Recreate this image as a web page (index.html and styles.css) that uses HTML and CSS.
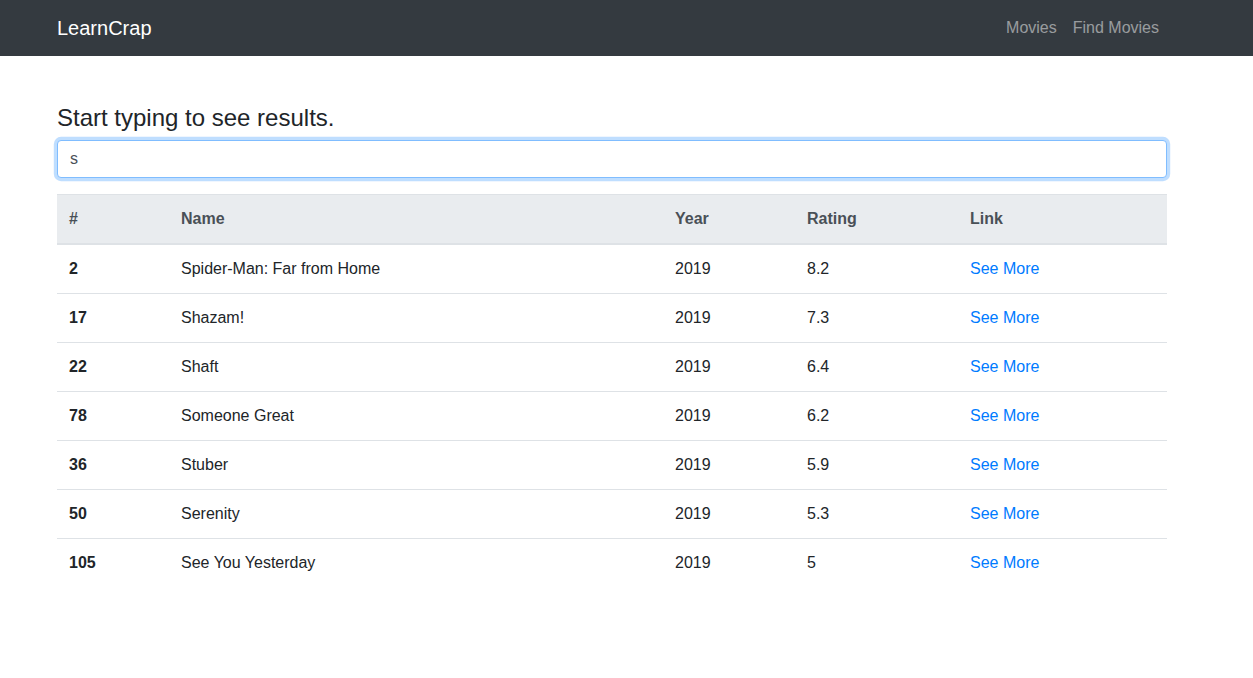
FILE: index.html
```html
<!DOCTYPE html>
<html lang="en">
<head>
<meta charset="utf-8">
<title>LearnCrap</title>
<link rel="stylesheet" href="styles.css">
</head>
<body>
<nav class="navbar">
  <div class="container nav-inner">
    <a class="brand" href="#">LearnCrap</a>
    <ul class="nav-links">
      <li><a class="nav-link" href="#">Movies</a></li>
      <li><a class="nav-link" href="#">Find Movies</a></li>
    </ul>
  </div>
</nav>
<main class="container main">
  <h4 class="title">Start typing to see results.</h4>
  <div class="form-group">
    <input class="form-control" type="text" value="s">
  </div>
  <table class="table">
    <thead>
      <tr>
        <th class="c-id">#</th>
        <th class="c-name">Name</th>
        <th class="c-year">Year</th>
        <th class="c-rating">Rating</th>
        <th class="c-link">Link</th>
      </tr>
    </thead>
    <tbody>
      <tr><th>2</th><td>Spider-Man: Far from Home</td><td>2019</td><td>8.2</td><td><a href="#">See More</a></td></tr>
      <tr><th>17</th><td>Shazam!</td><td>2019</td><td>7.3</td><td><a href="#">See More</a></td></tr>
      <tr><th>22</th><td>Shaft</td><td>2019</td><td>6.4</td><td><a href="#">See More</a></td></tr>
      <tr><th>78</th><td>Someone Great</td><td>2019</td><td>6.2</td><td><a href="#">See More</a></td></tr>
      <tr><th>36</th><td>Stuber</td><td>2019</td><td>5.9</td><td><a href="#">See More</a></td></tr>
      <tr><th>50</th><td>Serenity</td><td>2019</td><td>5.3</td><td><a href="#">See More</a></td></tr>
      <tr><th>105</th><td>See You Yesterday</td><td>2019</td><td>5</td><td><a href="#">See More</a></td></tr>
    </tbody>
  </table>
</main>
</body>
</html>
```
FILE: styles.css
```css
* { box-sizing: border-box; }
body {
  margin: 0;
  font-family: "Liberation Sans", Arial, sans-serif;
  font-size: 16px;
  line-height: 1.5;
  color: #212529;
  background: #fff;
}
.container {
  width: 1110px;
  margin-left: 57px;
}
.navbar {
  background: #343a40;
  height: 56px;
  padding: 8px 0;
}
.nav-inner {
  display: flex;
  align-items: center;
  justify-content: space-between;
  height: 40px;
}
.brand {
  font-size: 20px;
  line-height: 30px;
  color: #fff;
  text-decoration: none;
  padding: 5px 0;
}
.nav-links {
  display: flex;
  list-style: none;
  margin: 0;
  padding: 0;
}
.nav-link {
  display: block;
  padding: 8px;
  color: rgba(255,255,255,.5);
  text-decoration: none;
}
.main {
  padding-top: 48px;
}
.title {
  font-size: 24px;
  font-weight: 500;
  line-height: 1.2;
  margin: 0 0 7px;
}
.form-group {
  margin-bottom: 16px;
}
.form-control {
  display: block;
  width: 100%;
  height: 38px;
  padding: 6px 12px;
  font-family: inherit;
  font-size: 16px;
  line-height: 1.5;
  color: #495057;
  background: #fff;
  border: 1px solid #80bdff;
  border-radius: 4px;
  outline: 0;
  box-shadow: 0 0 0 3.2px rgba(0,123,255,.25);
}
.table {
  width: 100%;
  border-collapse: collapse;
  color: #212529;
}
.table th, .table td {
  padding: 12px;
  text-align: left;
  vertical-align: top;
  border-top: 1px solid #dee2e6;
}
.table th { font-weight: 700; }
.table thead th {
  background: #e9ecef;
  color: #495057;
  border-bottom: 2px solid #dee2e6;
  vertical-align: bottom;
}
.c-id { width: 112px; }
.c-name { width: 494px; }
.c-year { width: 132px; }
.c-rating { width: 163px; }
.c-link { width: 209px; }
.table a {
  color: #007bff;
  text-decoration: none;
}
```
